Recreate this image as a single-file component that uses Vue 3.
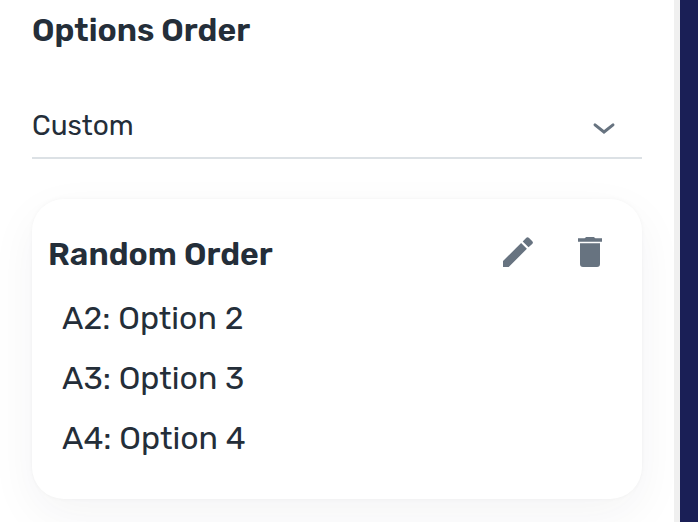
<script setup>
const options = ['A2: Option 2', 'A3: Option 3', 'A4: Option 4']
</script>

<template>
  <div class="screen">
    <main class="panel">
      <h1 class="title">Options Order</h1>
      <div class="select">
        <span class="value">Custom</span>
        <svg class="chevron" width="24" height="14" viewBox="0 0 24 14">
          <path d="M3 2.9 12 10 21 2.9" fill="none" stroke="#677380" stroke-width="3" stroke-linecap="round" stroke-linejoin="miter" />
        </svg>
      </div>
      <section class="card">
        <header class="head">
          <h2 class="name">Random Order</h2>
          <div class="actions">
            <svg width="32" height="32" viewBox="0 0 32 32" fill="#677380">
              <path d="M1 25.1 19.1 7 24.9 12.8 6.7 31H1ZM20.7 5.4 24.1 2Q25.4.4 26.8 1.8L30.3 5.3Q31.6 6.6 30.2 8L26.5 11.2Z" />
            </svg>
            <svg width="24" height="32" viewBox="0 0 24 32" fill="#677380">
              <path d="M0 2.2H6.6L8.2 1H15.8L17.4 2.2H24V5.8H0ZM2 7.2H22V28Q22 31 19 31H5Q2 31 2 28Z" />
            </svg>
          </div>
        </header>
        <ul class="list">
          <li v-for="option in options" :key="option">{{ option }}</li>
        </ul>
      </section>
    </main>
    <div class="track"></div>
    <div class="backdrop"></div>
  </div>
</template>

<style>
body {
  margin: 0;
  background: #fff;
}
</style>

<style scoped>
.screen {
  display: flex;
  width: 698px;
  height: 522px;
  overflow: hidden;
  color: #242e39;
  font-family: Rubik, Roboto, sans-serif;
}
.panel {
  width: 674px;
  box-sizing: border-box;
  padding: 10px 32px 0;
  overflow: hidden;
}
.track {
  width: 6px;
  background: #f0f0f0;
}
.backdrop {
  width: 18px;
  background: #1a1f56;
}
.title,
.name {
  margin: 0;
  font-size: 32px;
  line-height: 40px;
  font-weight: 600;
  white-space: nowrap;
}
.select {
  display: flex;
  align-items: center;
  justify-content: space-between;
  width: 610px;
  height: 63px;
  box-sizing: border-box;
  margin-top: 46px;
  padding-right: 26px;
  border-bottom: 2px solid #dce1e5;
}
.value {
  margin-bottom: 2px;
  font-size: 28px;
  line-height: 36px;
}
.chevron {
  margin-top: 5px;
}
.card {
  width: 610px;
  height: 300px;
  box-sizing: border-box;
  margin-top: 40px;
  padding: 35px 40px 0 16px;
  border-radius: 32px;
  background: #fff;
  box-shadow: 0 0 4px rgba(36, 46, 57, 0.04), 0 16px 48px rgba(36, 46, 57, 0.05);
}
.head {
  display: flex;
  justify-content: space-between;
  height: 40px;
}
.actions {
  display: flex;
  gap: 44px;
  padding-top: 2px;
}
.list {
  margin: 14px 0 0;
  padding: 0 0 0 14px;
  list-style: none;
}
.list li {
  height: 60px;
  font-size: 32px;
  line-height: 60px;
  white-space: nowrap;
}
</style>
